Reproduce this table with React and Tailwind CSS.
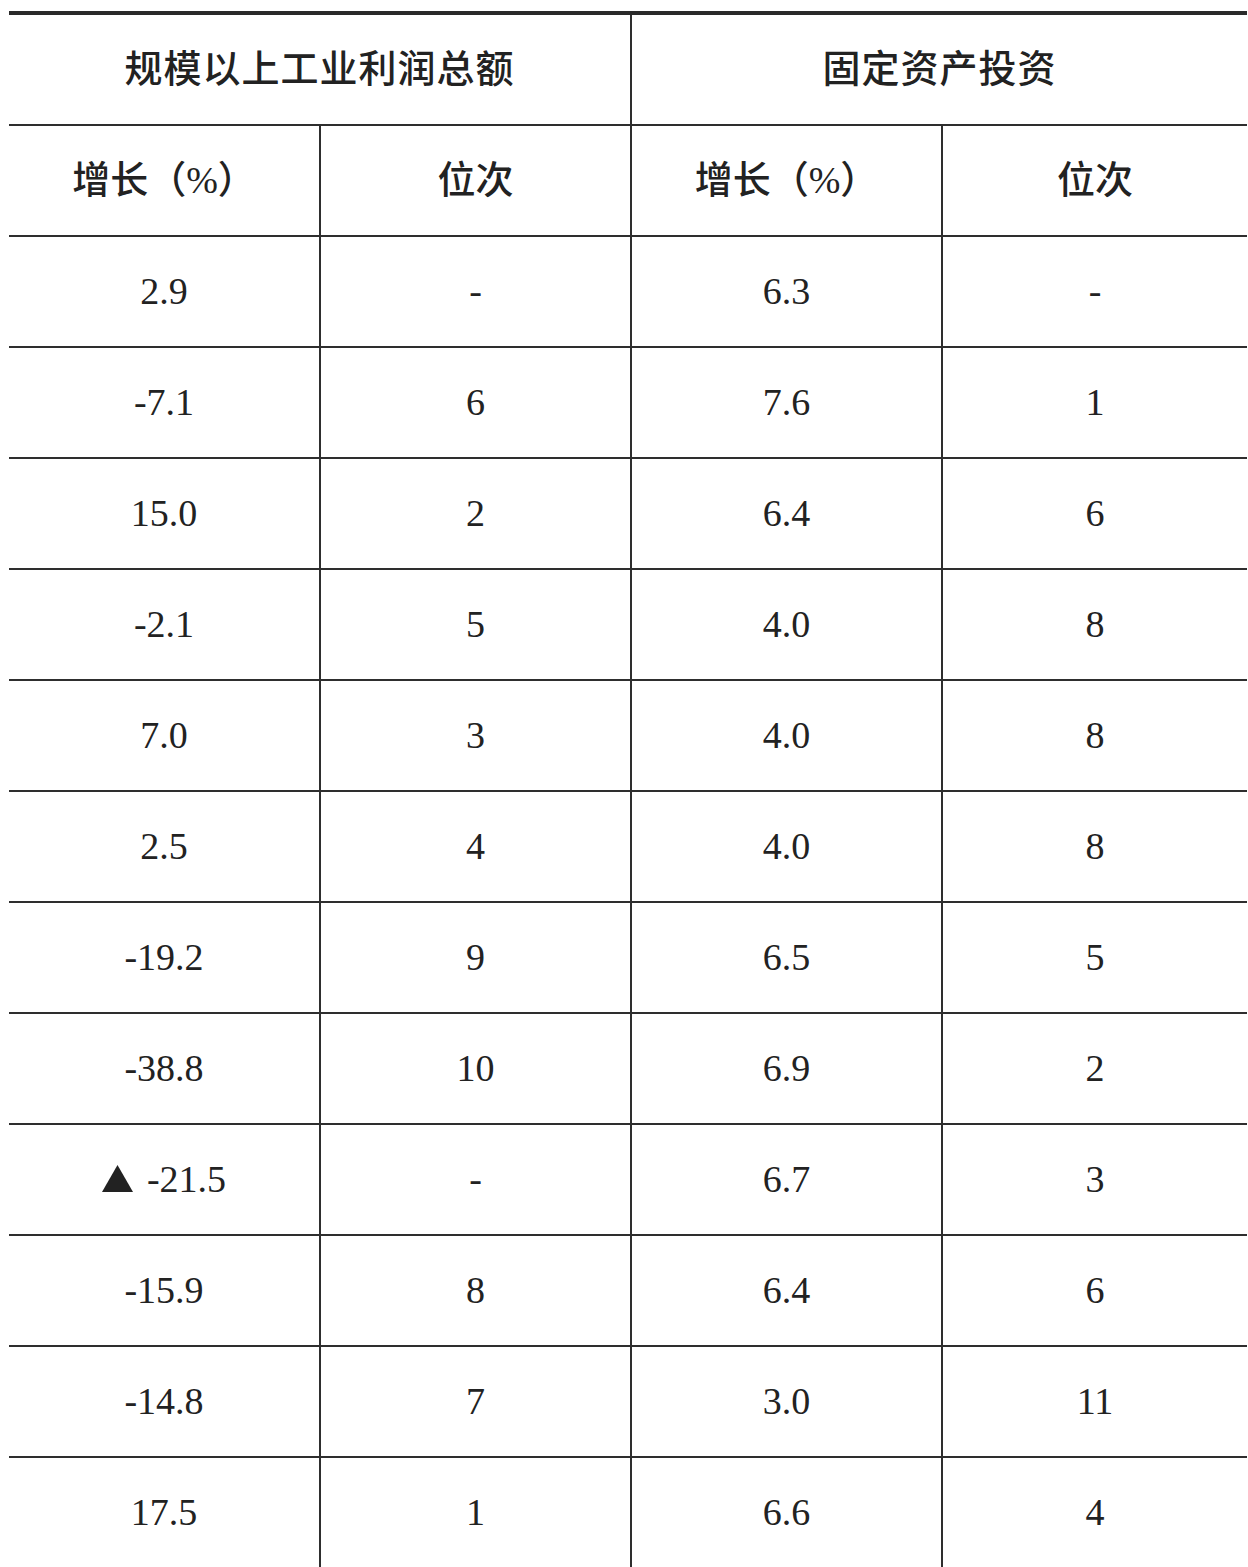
const rows = [
  ["2.9", "-", "6.3", "-"],
  ["-7.1", "6", "7.6", "1"],
  ["15.0", "2", "6.4", "6"],
  ["-2.1", "5", "4.0", "8"],
  ["7.0", "3", "4.0", "8"],
  ["2.5", "4", "4.0", "8"],
  ["-19.2", "9", "6.5", "5"],
  ["-38.8", "10", "6.9", "2"],
  ["▲ -21.5", "-", "6.7", "3"],
  ["-15.9", "8", "6.4", "6"],
  ["-14.8", "7", "3.0", "11"],
  ["17.5", "1", "6.6", "4"],
];

const cols = "grid grid-cols-[312px_311px_311px_1fr]";
const cell =
  "flex items-center justify-center border-b-2 border-[#2e2e2e] h-[111px]";
const cjk = "font-['Liberation_Serif','Noto_Sans_CJK_SC',serif] text-[38px] font-medium";

function Triangle() {
  return (
    <svg width="31" height="27" viewBox="0 0 31 27" className="mr-[14px] mb-[3px]">
      <polygon points="15.5,0 31,27 0,27" fill="#222" />
    </svg>
  );
}

export default function App() {
  return (
    <div className="bg-white min-h-[1567px] pt-[11px] pl-[9px] text-[#222] overflow-hidden">
      <div className="w-[1238px] border-t-4 border-[#2a2a2a]">
        <div className="grid grid-cols-[623px_1fr]">
          <div className={`${cell} border-r-2 ${cjk} tracking-[1px]`}>规模以上工业利润总额</div>
          <div className={`${cell} ${cjk} tracking-[1px]`}>固定资产投资</div>
        </div>
        <div className={cols}>
          <div className={`${cell} border-r-2 ${cjk}`}>增长（%）</div>
          <div className={`${cell} border-r-2 ${cjk}`}>位次</div>
          <div className={`${cell} border-r-2 ${cjk}`}>增长（%）</div>
          <div className={`${cell} ${cjk}`}>位次</div>
        </div>
        {rows.map((r, i) => (
          <div key={i} className={cols}>
            {r.map((v, j) => (
              <div
                key={j}
                className={`${cell} ${j < 3 ? "border-r-2" : ""} ${
                  i === rows.length - 1 ? "border-b-0" : ""
                } font-['Liberation_Serif','Noto_Sans_CJK_SC',serif] text-[38px]`}
              >
                {v.startsWith("▲") ? (
                  <span className="flex items-center">
                    <Triangle />
                    {v.slice(2)}
                  </span>
                ) : (
                  v
                )}
              </div>
            ))}
          </div>
        ))}
      </div>
    </div>
  );
}
